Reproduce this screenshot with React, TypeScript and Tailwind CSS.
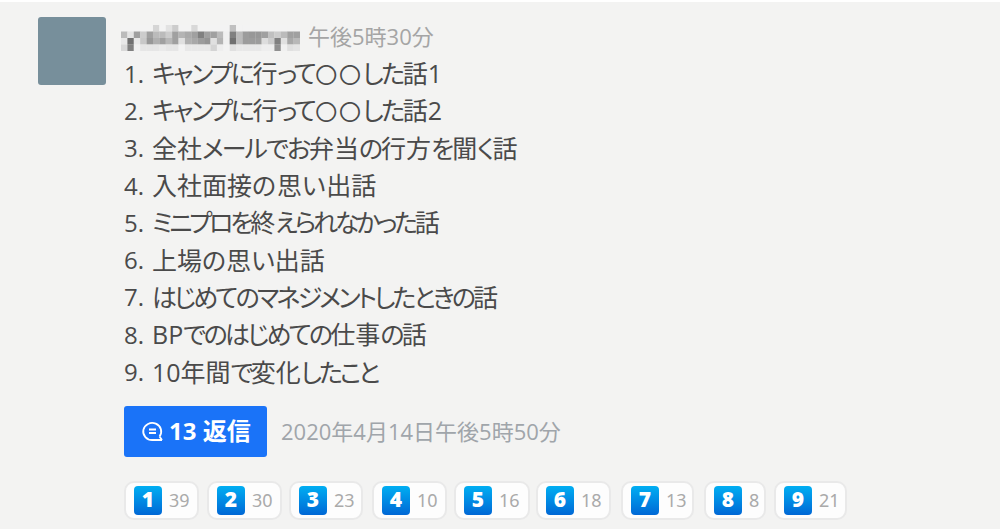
const messages = [
  { text: 'キャンプに行って〇〇した話1', kana: 'tracking-[-2.4px]' },
  { text: 'キャンプに行って〇〇した話2', kana: 'tracking-[-2.4px]' },
  { text: '全社メールでお弁当の行方を聞く話', kana: 'tracking-[-2px]' },
  { text: '入社面接の思い出話', kana: 'tracking-[0.8px]' },
  { text: 'ミニプロを終えられなかった話', kana: 'tracking-[-3.2px]' },
  { text: '上場の思い出話', kana: 'tracking-[0px]' },
  { text: 'はじめてのマネジメントしたときの話', kana: 'tracking-[-2.8px]' },
  { text: 'BPでのはじめての仕事の話', kana: 'tracking-[-2.7px]' },
  { text: '10年間で変化したこと', kana: 'tracking-[-3px]' },
]

const reactions = [
  { id: 1, count: 39, box: 'w-[75px] mr-[8px]' },
  { id: 2, count: 30, box: 'w-[75px] mr-[7px]' },
  { id: 3, count: 23, box: 'w-[74px] mr-[9px]' },
  { id: 4, count: 10, box: 'w-[75px] mr-[7px]' },
  { id: 5, count: 16, box: 'w-[76px] mr-[6px]' },
  { id: 6, count: 18, box: 'w-[75px] mr-[10px]' },
  { id: 7, count: 13, box: 'w-[73px] mr-[10px]' },
  { id: 8, count: 8, box: 'w-[62px] mr-[8px]' },
  { id: 9, count: 21, box: 'w-[73px]' },
]

// Grey level of every mosaic cell, one hex byte per cell
const nameMosaic = [
  'f3f3f3f3f3d5f3e2ccf3f3d8f3f3f3f3f3c0f3f3f3f3f3f3f3f3f3f3',
  'bbe4a0cca0bbbbcca0b4aaa080a0a0bbf080bb9c9898a0c0ccbba0a0',
  'e870e8c898b0a0b8a0e0b0a89c94e0b4f070bb9c9c9cddcc80e0a8b8',
  'd880f0e6e6e6eae6e6f3e8e8e8e8d4eef3e0e8e8e8e8eeee90f0e0e4',
]

const MaskedName = () => (
  <svg className="h-[26px] w-[179px]" viewBox="0 0 28 4" preserveAspectRatio="none">
    {nameMosaic.map((row, y) =>
      row.match(/../g)!.map((g, x) => (
        <rect key={`${x}-${y}`} x={x} y={y} width="1.02" height="1.02" fill={`#${g}${g}${g}`} />
      ))
    )}
  </svg>
)

const ReplyIcon = () => (
  <svg className="h-[22px] w-[23px]" viewBox="0 0 23 22" fill="none" stroke="white" strokeWidth="1.8">
    <path d="M18.5 16.5a9 8.5 0 1 0-7 3.5h9.5M18.5 16.5l2.5 3.5" />
    <path d="M8 9.5h7M8 13h7" />
  </svg>
)

const MessageText = ({ text, kana }: { text: string; kana: string }) => (
  <span className="[font-feature-settings:'palt']">
    {text.split(/([ぁ-ヿ]+|〇+)/).map((part, i) => {
      if (i % 2 === 0) return <span key={i}>{part}</span>
      const style = part[0] === '〇' ? 'ml-[1px] text-[22px] tracking-[1.6px]' : kana
      return (
        <span key={i} className={style}>
          {part}
        </span>
      )
    })}
  </span>
)

export default function App() {
  return (
    <div className="h-[529px] w-[1000px] overflow-hidden border-t-2 border-white bg-[#f3f3f2] font-['Open_Sans','Noto_Sans_CJK_JP',sans-serif]">
      <div className="flex pl-[38px] pt-[15px]">
        <div className="h-[68px] w-[68px] rounded-[3px] bg-[#778f9b]" />
        <div className="ml-[18px] whitespace-nowrap text-[#4a4a4a]">
          <div className="flex h-[38px] items-center pt-px">
            <div className="-ml-[3px] flex pt-[3px]">
              <MaskedName />
            </div>
            <span className="ml-[8px] text-[22px] text-[#a5a5a5] [font-feature-settings:'palt']">午後5時30分</span>
          </div>
          {messages.map((m, i) => (
            <div key={i} className="flex h-[37.3px] items-center text-[25px] leading-none">
              <span className="w-[28px] text-[24px]">{i + 1}.</span>
              <MessageText text={m.text} kana={m.kana} />
            </div>
          ))}
          <div className="mt-[15px] flex items-center">
            <div className="flex h-[51px] w-[143px] items-center rounded-[3px] bg-[#1a73f8] pl-[17px] text-[24px] font-bold leading-none text-white">
              <ReplyIcon />
              <span className="ml-[5px]">13 返信</span>
            </div>
            <span className="ml-[14px] text-[22px] leading-none text-[#a0a5aa] [font-feature-settings:'palt']">
              2020年4月14日午後5時50分
            </span>
          </div>
          <div className="mt-[24px] flex">
            {reactions.map((r) => (
              <div key={r.id} className={`flex h-[39px] shrink-0 items-center rounded-[10px] border-2 border-[#e9e9e9] bg-[#fdfdfd] pl-[8px] ${r.box}`}>
                <span className="flex h-[29px] w-[28px] items-center justify-center rounded-[4px] bg-linear-to-b from-[#00aef2] to-[#0067d5] pb-px font-['Noto_Sans',sans-serif] text-[21px] font-black text-white">
                  {r.id}
                </span>
                <span className="ml-[7px] font-['Noto_Sans',sans-serif] text-[18px] text-[#aaa]">{r.count}</span>
              </div>
            ))}
          </div>
        </div>
      </div>
    </div>
  )
}
